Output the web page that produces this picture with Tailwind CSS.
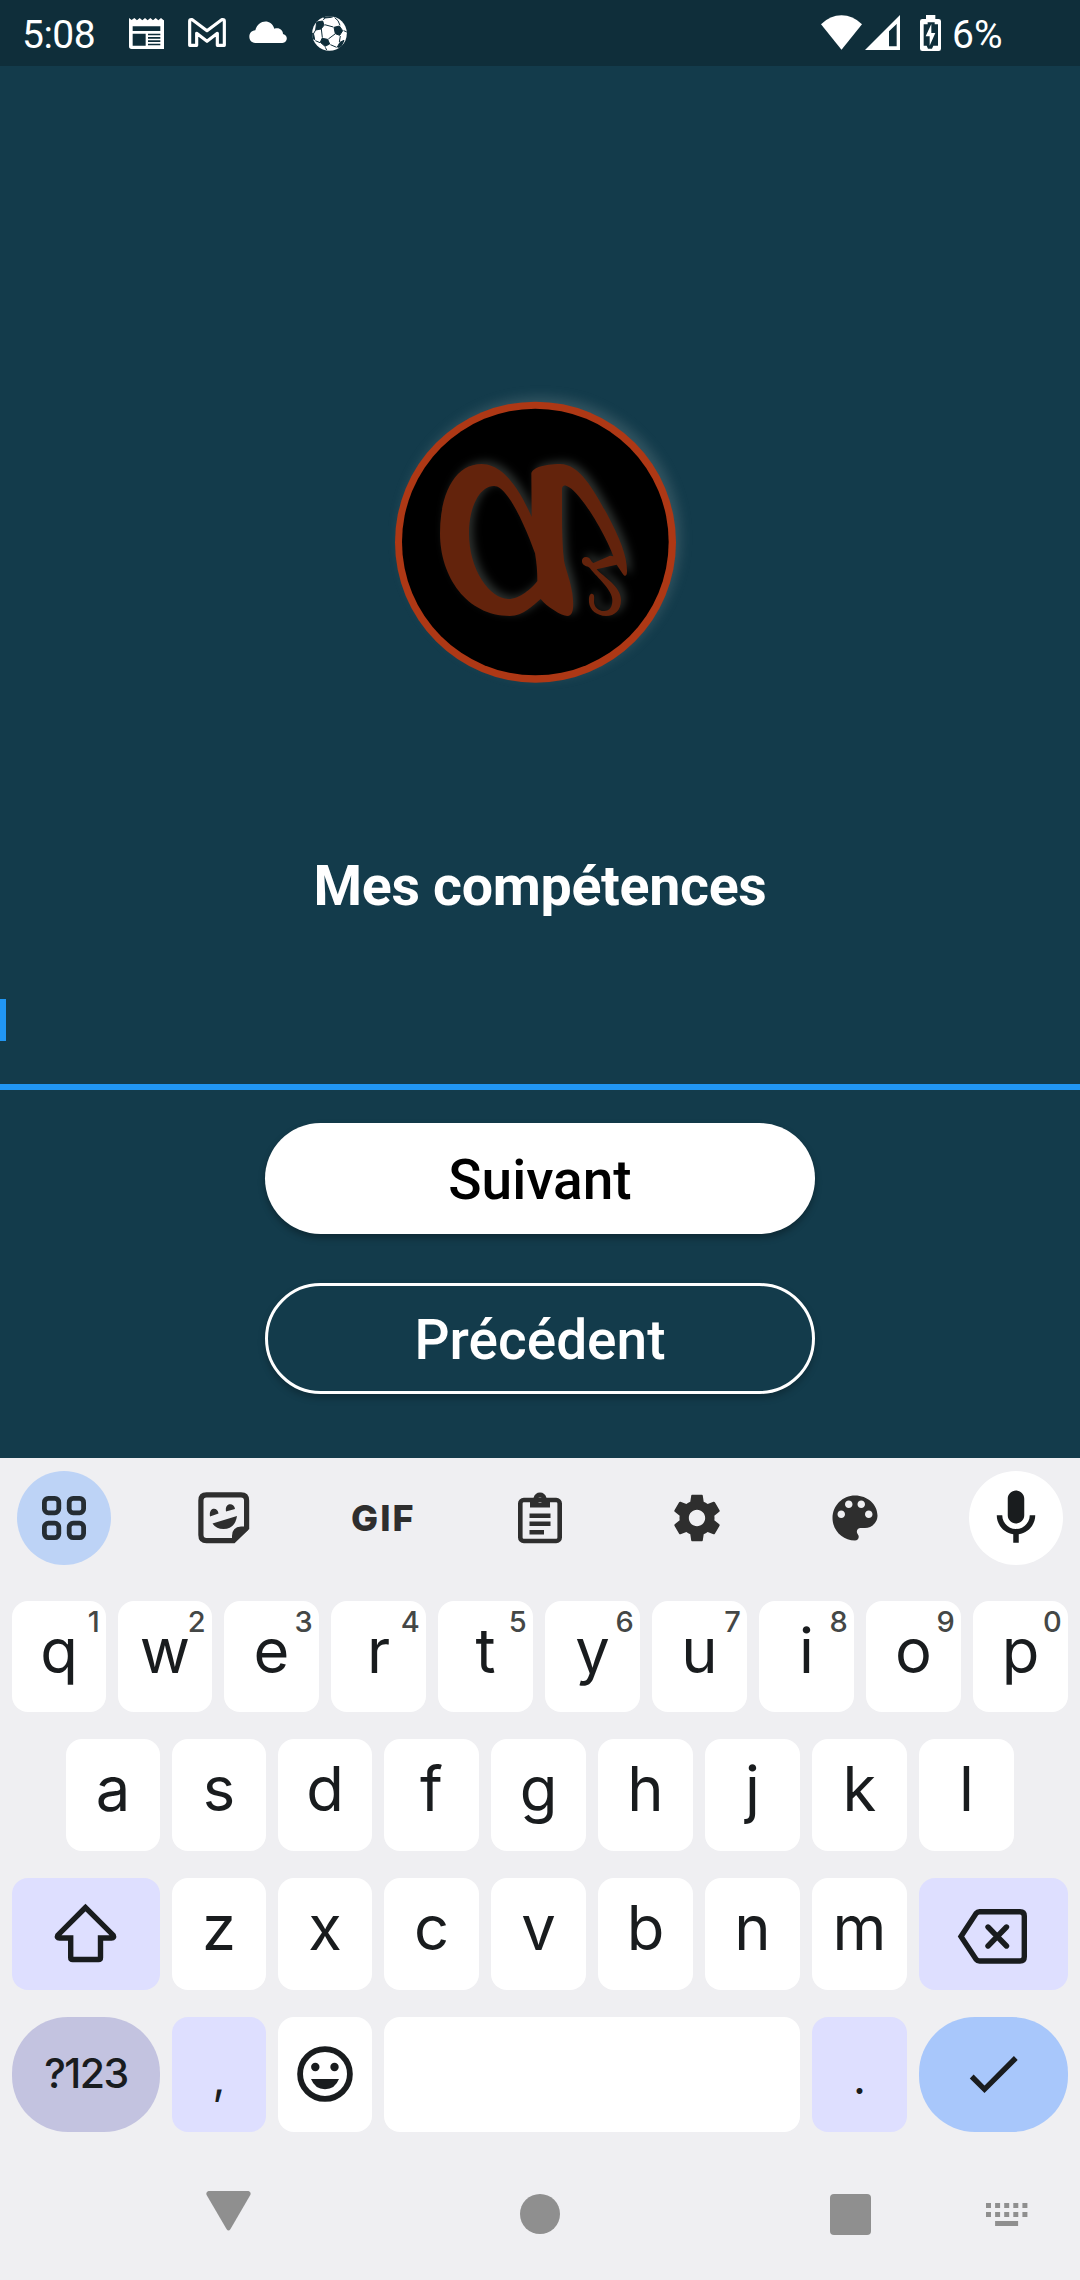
<!DOCTYPE html>
<html lang="fr">
<head>
<meta charset="utf-8">
<title>Mes compétences</title>
<script src="https://cdn.jsdelivr.net/npm/@tailwindcss/browser@4"></script>
</head>
<body class="w-[1080px] h-[2280px] overflow-hidden bg-[#133b4b] font-[Roboto,sans-serif] flex flex-col">

<!-- Status bar -->
<header class="h-[66px] shrink-0 bg-[#0f2e3a] text-white text-[39px] leading-[70px] flex items-start">
  <span class="w-[106px] pl-[22px] tracking-[-0.500px]">5:08</span>
  <svg class="ml-[23px] mt-[18px] w-[35px] h-[31px]" viewBox="387 54 105 93"><path fill="#fff" fill-rule="evenodd" d="M387 54l8 6 8-6 8 7 8-7 8 7 8-7 8 7 8-7 8 7 8-7 8 7 8-7 8 7 8-6V139q0 8-8 8H395q-8 0-8-8zM398 79V93H481V79zM398 101V137H437V101zM444 101V106H481V101zM444 111V116H481V111zM444 121V126H481V121zM444 131V136H481V131z"/></svg>
  <svg class="ml-[24px] mt-[18px] w-[38px] h-[29px]" viewBox="565 54 114 87"><path fill="none" stroke="#fff" stroke-width="9.500" stroke-linejoin="round" d="M570 136V64Q570 59 575 59H578L622 92 666 59H669Q674 59 674 64V136H653V100L622 124 591 100V136z"/></svg>
  <svg class="ml-[23px] mt-[21px] w-[38px] h-[22px]" viewBox="748 63 114 66"><path fill="#fff" d="M767 129C742 127 744 92 767 91C775 58 815 55 824 86C838 81 850 89 850 102C867 106 864 128 848 129z"/></svg>
  <svg class="ml-[25px] mt-[16px] w-[35px] h-[35px]" viewBox="936 48 105 105"><defs><clipPath id="ball"><circle cx="988.500" cy="100.500" r="52"/></clipPath></defs><circle cx="988.500" cy="100.500" r="52" fill="#fff"/><g clip-path="url(#ball)" fill="#0f2e3a" stroke="#0f2e3a" stroke-width="3"><path d="M950 66l18-3 4 13-9 11-16 3zM1002 82l16-4 10 14-9 14-13-5zM966 115l17 3 6 14-14 7-14-12zM1020 127l12-6-10 22-10-2zM968 50l10-6 26 4-10 4-20 2zM936 99l5 4 3 16-8-5z"/><path fill="none" d="M974 74L1000 81M970 60L976 51M1004 53L1014 62 1020 76M1031 92L1041 96M964 87L967 113M1005 102L985 117M1021 108L1018 126M991 134L1010 142M960 128L946 122M947 90L940 102M976 142L980 150"/></g></svg>
  <svg class="ml-[474px] mt-[15px] w-[41px] h-[35px]" viewBox="122 45 124 104"><path fill="#fff" d="M184 149L122 72Q150 45 184 45T246 72z"/></svg>
  <svg class="ml-[3px] mt-[15px] w-[35px] h-[35px]" viewBox="255 45 105 105"><path fill="#fff" fill-rule="evenodd" d="M360 45V150H255zM350 72L327 94V139H350z"/></svg>
  <svg class="ml-[20px] mt-[15px] w-[21px] h-[36px]" viewBox="420 45 63 108"><path fill="#fff" fill-rule="evenodd" d="M438 45H466V57H476Q483 57 483 64V146Q483 153 476 153H427Q420 153 420 146V64Q420 57 427 57H438zM443 67V73H431V137H440L444 146H456L460 137H474V73H464V67zM454 72V99H466L449 137V109H437z"/></svg>
  <span class="ml-[11px]">6%</span>
</header>

<!-- Form -->
<main class="h-[1392px] shrink-0 flex flex-col items-center">
  <svg class="mt-[324px] mr-[10px] w-[310px] h-[310px] shrink-0 overflow-visible" viewBox="0 0 930 930">
    <g class="drop-shadow-[14px_-14px_18px_rgba(200,205,200,0.17)]"><circle cx="466.500" cy="456.500" r="421.500" fill="#ae3815"/></g>
    <circle cx="466" cy="456" r="400" fill="#000"/>
    <path class="drop-shadow-[12px_-8px_12px_rgba(175,190,180,0.26)]" fill="#63230c" fill-rule="evenodd" d="M455 380C420 300 370 222 305 222C225 222 180 310 180 430C180 560 260 678 390 678C430 678 460 645 482 627C500 650 545 678 562 678C585 678 580 635 577 610C570 560 552 530 551 500C546 440 546 400 546 300C546 288 552 286 558 287C600 300 680 440 700 499L690 497L640 519C632 515 632 501 618 501C605 501 603 515 609 523C617 531 628 528 634 540C650 560 697 600 697 630C697 650 690 663 672 663C655 663 642 650 642 635C642 625 645 612 636 611C628 611 626 622 627 637C629 660 650 678 678 678C705 678 723 660 723 630C723 590 670 560 650 538L710 524L728 551C733 560 741 560 741 545C742 500 720 445 680 370C640 300 600 222 540 222C490 222 454 235 454 252zM342 288C300 288 267 350 267 430C267 540 330 627 385 627C420 627 455 595 472 573C472 545 470 520 465 490C440 420 385 288 342 288z"/>
  </svg>
  <h1 class="mt-[147px] h-20 leading-20 text-[55.500px] tracking-[-0.300px] font-bold text-white">Mes compétences</h1>
  <div class="mt-[60px] w-full h-[103px] border-b-6 border-[#2196f3] flex items-start"><span class="mt-[12px] w-[6px] h-[42px] bg-[#2196f3]"></span></div>
  <button class="mt-[33px] w-[550px] h-[111px] shrink-0 rounded-full bg-white text-black text-[55px] leading-[114px] font-medium shadow-[0_4px_7px_rgba(0,0,0,0.3)]">Suivant</button>
  <button class="mt-[49px] w-[550px] h-[111px] shrink-0 rounded-full bg-[#133b4b] border-3 border-white text-white text-[55px] leading-[108px] font-medium shadow-[0_4px_7px_rgba(0,0,0,0.25)]">Précédent</button>
</main>

<!-- Keyboard -->
<section class="h-[822px] shrink-0 bg-[#efeff2] pt-[13px] text-[#191c1e] font-[Inter,sans-serif] flex flex-col">
  <div class="h-[94px] mx-[17px] flex justify-between *:size-[94px] *:flex *:items-center *:justify-center text-[#2e2e2e]">
    <div class="rounded-full bg-[#bdd3f6]"><svg class="w-[44px] h-[44px]" viewBox="0 0 44 44" fill="none" stroke="#252d33" stroke-width="4.800"><rect x="2.400" y="2.400" width="14.400" height="14.400" rx="4"/><rect x="27.200" y="2.400" width="14.400" height="14.400" rx="4"/><rect x="2.400" y="27.200" width="14.400" height="14.400" rx="4"/><rect x="27.200" y="27.200" width="14.400" height="14.400" rx="4"/></svg></div>
    <div><svg class="w-[52px] h-[52px] ml-[2px]" viewBox="0 0 52 52"><path fill="none" stroke="#2e2e2e" stroke-width="5.200" d="M8.500 2.900H43Q48.600 2.900 48.600 8.500V36L35.500 48.600H8.500Q2.900 48.600 2.900 43V8.500Q2.900 2.900 8.500 2.900z"/><path fill="#2e2e2e" d="M50 34.500H43Q34 35 34 44V50H37L50 38zM14.500 31.500L39 24Q37 37 25.500 37 18 37 14.500 31.500zM12 24.500C10.500 14.500 20 15 20.500 21.500zM28 19.500C26.500 10 36.500 10.500 37 17z"/></svg></div>
    <div><span class="font-extrabold text-[36px] leading-[94px] tracking-[2px] ml-[4px]">GIF</span></div>
    <div><svg class="w-[44px] h-[52px]" viewBox="0 0 44 52"><rect x="2.300" y="8" width="39.400" height="41" rx="3.500" fill="none" stroke="#2e2e2e" stroke-width="4.600"/><path fill="#2e2e2e" fill-rule="evenodd" d="M12 6H15.500Q17 .5 22 .5T28.500 6H32V15.500H12zM22 5.500a2.600 2.600 0 1 0 .01 0zM11.500 21.500H32.500V26H11.500zM11.500 29.500H32.500V34H11.500zM11.500 38H26V42.500H11.500z"/></svg></div>
    <div><svg class="size-[56px] mr-[3px]" viewBox="0 0 24 24" fill="currentColor"><path d="M19.430 12.980c.04-.32.07-.64.07-.98s-.03-.66-.07-.98l2.110-1.650c.19-.15.24-.42.12-.64l-2-3.460c-.12-.22-.39-.3-.61-.22l-2.490 1c-.52-.4-1.080-.73-1.690-.98l-.38-2.650C14.460 2.180 14.250 2 14 2h-4c-.25 0-.46.18-.49.42l-.38 2.650c-.61.25-1.170.59-1.690.98l-2.490-1c-.23-.09-.49 0-.61.22l-2 3.460c-.13.22-.07.49.12.64l2.110 1.650c-.04.32-.07.65-.07.98s.03.66.07.98l-2.110 1.650c-.19.15-.24.42-.12.64l2 3.460c.12.22.39.3.61.22l2.490-1c.52.4 1.080.73 1.690.98l.38 2.650c.03.24.24.42.49.42h4c.25 0 .46-.18.49-.42l.38-2.650c.61-.25 1.170-.59 1.690-.98l2.490 1c.23.09.49 0 .61-.22l2-3.460c.12-.22.07-.49-.12-.64l-2.110-1.650zM12 15.500c-1.930 0-3.500-1.570-3.500-3.500s1.570-3.500 3.500-3.500 3.500 1.570 3.500 3.500-1.570 3.500-3.500 3.500z"/></svg></div>
    <div><svg class="size-[60px] mr-[4px]" viewBox="0 0 24 24" fill="currentColor"><path d="M12 3c-4.970 0-9 4.030-9 9s4.030 9 9 9c.83 0 1.500-.67 1.500-1.500 0-.39-.15-.74-.39-1.010-.23-.26-.38-.61-.38-.99 0-.83.67-1.500 1.500-1.500H16c2.760 0 5-2.240 5-5 0-4.420-4.030-8-9-8zm-5.500 9c-.83 0-1.500-.67-1.500-1.500S5.670 9 6.500 9 8 9.670 8 10.500 7.330 12 6.500 12zm3-4C8.670 8 8 7.330 8 6.500S8.670 5 9.500 5s1.500.67 1.500 1.500S10.330 8 9.500 8zm5 0c-.83 0-1.500-.67-1.500-1.500S13.670 5 14.500 5s1.500.67 1.500 1.500S15.330 8 14.500 8zm3 4c-.83 0-1.500-.67-1.500-1.500S16.670 9 17.500 9s1.500.67 1.500 1.500-.67 1.500-1.500 1.500z"/></svg></div>
    <div class="rounded-full bg-white"><svg class="size-[66px]" viewBox="0 0 24 24" fill="#191c1e"><path d="M12 14c1.660 0 3-1.340 3-3V5c0-1.660-1.340-3-3-3S9 3.340 9 5v6c0 1.660 1.340 3 3 3zM17 11c0 2.760-2.240 5-5 5s-5-2.240-5-5H5c0 3.530 2.610 6.430 6 6.920V21h2v-3.080c3.390-.49 6-3.390 6-6.920h-2z"/></svg></div>
  </div>

  <div class="mt-[36px] mx-3 h-[111px] grid grid-cols-[94px_94px_repeat(8,95px)] gap-3 text-[61.500px] leading-[100px] text-center *:relative *:bg-white *:rounded-2xl [&_sup]:absolute [&_sup]:top-0 [&_sup]:right-[7px] [&_sup]:text-[29px] [&_sup]:leading-[42px] [&_sup]:text-[#444746] [&_sup]:font-medium [&_sup]:tracking-tight">
    <div>q<sup>1</sup></div><div>w<sup>2</sup></div><div>e<sup>3</sup></div><div>r<sup>4</sup></div><div>t<sup>5</sup></div><div>y<sup>6</sup></div><div>u<sup>7</sup></div><div>i<sup>8</sup></div><div>o<sup>9</sup></div><div>p<sup>0</sup></div>
  </div>
  <div class="mt-[27px] mx-[66px] h-[112px] grid grid-cols-[94px_94px_94px_repeat(6,95px)] gap-3 text-[61.500px] leading-[100px] text-center *:bg-white *:rounded-2xl">
    <div>a</div><div>s</div><div>d</div><div>f</div><div>g</div><div>h</div><div>j</div><div>k</div><div>l</div>
  </div>
  <div class="mt-[27px] mx-3 h-[112px] flex gap-3">
    <div class="w-[148px] rounded-2xl bg-[#dedfff]"><svg class="w-[148px] h-[112px]" viewBox="0 0 148 112" fill="none" stroke="#191c1e" stroke-width="5.400"><path d="M73.500 29.500L45.800 57.200Q44.500 60 47.500 60H58.700V79.500Q58.700 81.500 60.700 81.500H86.500Q88.500 81.500 88.500 79.500V60H99.500Q102.500 60 101.200 57.200z"/></svg></div>
    <div class="grid grid-cols-[94px_94px_repeat(5,95px)] gap-3 text-[61.500px] leading-[100px] text-center *:bg-white *:rounded-2xl">
      <div>z</div><div>x</div><div>c</div><div>v</div><div>b</div><div>n</div><div>m</div>
    </div>
    <div class="w-[149px] rounded-2xl bg-[#dedfff]"><svg class="w-[149px] h-[112px]" viewBox="0 0 149 112" fill="none" stroke="#191c1e" stroke-width="5.400"><path d="M42 58.500L57 35.500Q58.500 33.700 60.500 33.700H101Q105.300 33.700 105.300 38V78.700Q105.300 83 101 83H60.500Q58.500 83 57 81.200z"/><path stroke-linecap="round" d="M69 49L87.500 68M87.500 49L69 68"/></svg></div>
  </div>
  <div class="mt-[27px] mx-3 h-[115px] flex gap-3 text-center">
    <div class="w-[148px] rounded-[56px] bg-[#c3c3e0] text-[41px] leading-[113px] font-medium tracking-[-1.500px]">?123</div>
    <div class="w-[94px] rounded-2xl bg-[#dedfff] text-[45px] leading-[121px]">,</div>
    <div class="w-[94px] rounded-2xl bg-white"><svg class="w-[94px] h-[115px]" viewBox="0 0 94 115" fill="#191c1e"><circle cx="47" cy="57" r="24.900" fill="none" stroke="#191c1e" stroke-width="5.800"/><circle cx="37.300" cy="50" r="4.200"/><circle cx="56.500" cy="50" r="4.200"/><path d="M33 62H61Q57 72.200 47 72.200T33 62z"/></svg></div>
    <div class="flex-1 rounded-2xl bg-white"></div>
    <div class="w-[95px] rounded-2xl bg-[#dedfff] text-[45px] leading-[121px]">.</div>
    <div class="w-[149px] rounded-[56px] bg-[#a8c7fb]"><svg class="w-[149px] h-[115px]" viewBox="0 0 149 115" fill="none" stroke="#191c1e" stroke-width="5.400"><path d="M52.700 59.500L65.500 72.300 96.800 41"/></svg></div>
  </div>

  <!-- System navigation -->
  <nav class="mt-[59px] flex items-start text-[#8f8f8f]">
    <svg class="ml-[206px] w-[45px] h-[40px]" viewBox="0 0 45 40" fill="currentColor"><path d="M2.500 0H42.500Q45.500 1 44.300 4L24.500 38Q22.500 41 20.500 38L.6 4Q-.5 1 2.500 0z"/></svg>
    <span class="ml-[269px] mt-[3px] size-[40px] rounded-full bg-[#8f8f8f]"></span>
    <span class="ml-[270px] mt-[3px] size-[41px] rounded-[4px] bg-[#8f8f8f]"></span>
    <svg class="ml-[115px] mt-[12px] w-[42px] h-[23px]" viewBox="0 0 42 23" fill="currentColor"><path d="M0 0h5v5h-5zM9.100 0h5v5h-5zM18.200 0h5v5h-5zM27.300 0h5v5h-5zM36.400 0h5v5h-5zM0 9h5v5h-5zM9.100 9h5v5h-5zM18.200 9h5v5h-5zM27.300 9h5v5h-5zM36.400 9h5v5h-5zM9.100 18h23v5h-23z"/></svg>
  </nav>
</section>
</body>
</html>
